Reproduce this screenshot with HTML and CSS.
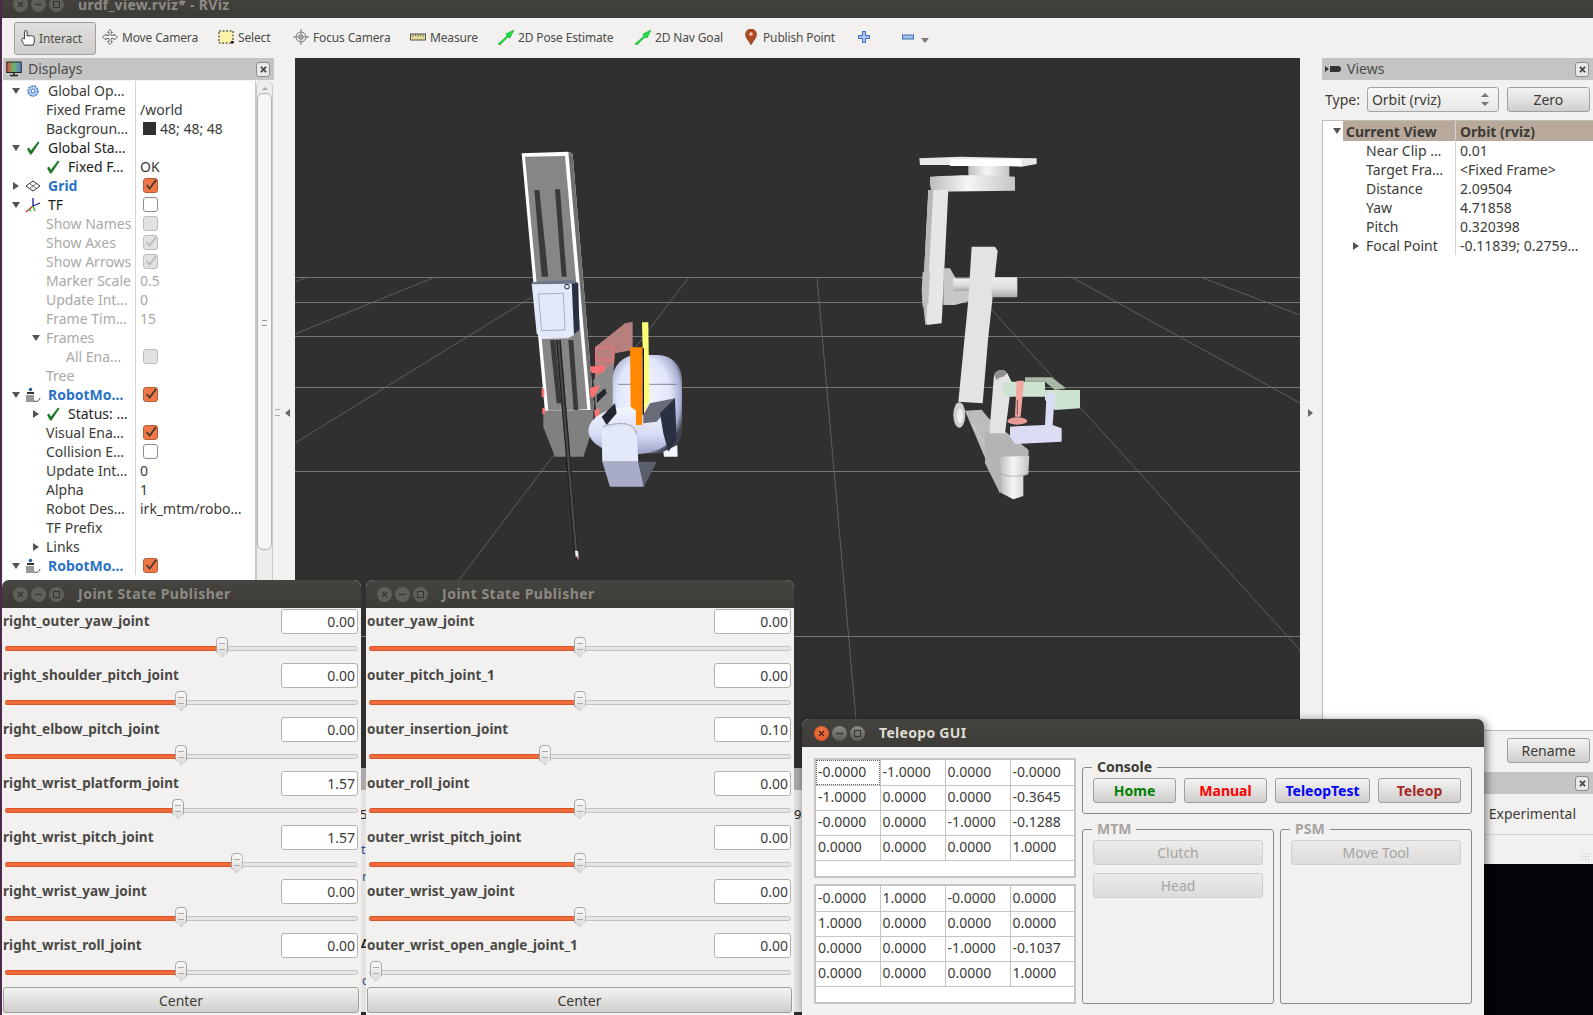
FILE: index.html
```html
<!DOCTYPE html>
<html lang="en">
<head>
<meta charset="utf-8">
<title>urdf_view.rviz* - RViz</title>
<link rel="stylesheet" href="styles.css">
</head>
<body>
<svg class="defs" width="0" height="0" aria-hidden="true">
  <defs>
    <linearGradient id="cyl" x1="0" x2="1" y1="0" y2="0"><stop offset="0" stop-color="#bdbdbd"/><stop offset=".45" stop-color="#f6f6f6"/><stop offset="1" stop-color="#c4c4c4"/></linearGradient>
    <linearGradient id="cylv" x1="0" x2="0" y1="0" y2="1"><stop offset="0" stop-color="#f0f0f0"/><stop offset=".6" stop-color="#d8d8d8"/><stop offset="1" stop-color="#a8a8a8"/></linearGradient>
    <radialGradient id="ball" cx=".45" cy=".42" r=".62"><stop offset="0" stop-color="#f4f6ff"/><stop offset=".62" stop-color="#e2e6fb"/><stop offset=".86" stop-color="#a8aed0"/><stop offset="1" stop-color="#3f4252"/></radialGradient>
    <linearGradient id="bowl" x1="0" x2="0" y1="0" y2="1"><stop offset="0" stop-color="#f4f6ff"/><stop offset=".6" stop-color="#d6daf4"/><stop offset="1" stop-color="#9a9fc4"/></linearGradient>
    <linearGradient id="mon" x1="0" x2="1" y1="0" y2="0"><stop offset="0" stop-color="#e04a3c"/><stop offset=".5" stop-color="#62b86a"/><stop offset="1" stop-color="#5d78d0"/></linearGradient>
    <symbol id="i-check" viewBox="0 0 16 16"><path d="M2 9l2-1.500 2 3L13 1.500l1.500 1L6.500 14.500 5 14.500z" fill="#1e7a26"/></symbol>
    <symbol id="i-box" viewBox="0 0 15 15"><path d="M3 7l3.500 4L14 1" fill="none" stroke="currentColor" stroke-width="2"/></symbol>
    <symbol id="i-robot" viewBox="0 0 16 16"><circle cx="5.500" cy="2.500" r="1.800" fill="#2f5f9e"/><rect x="2" y="5" width="7" height="2" fill="#333"/><path d="M2 15V8M4 15V8M6 15V8M8 15V8" stroke="#444" stroke-width="1.100"/><path d="M9 14c3 1 5 0 6-3" fill="none" stroke="#444"/></symbol>
    <symbol id="i-x" viewBox="0 0 15 15"><path d="M4 4l7 7M11 4l-7 7" stroke="currentColor" stroke-width="2.400"/></symbol>
  </defs>
</svg>

<div class="desktop">
  <div class="strip"></div>

  <!-- RViz main window -->
  <section class="win rviz">
    <header class="titlebar">
      <div class="lights">
        <span class="light"><svg viewBox="0 0 9 9"><path d="M2 2l5 5M7 2L2 7" stroke="#333" stroke-width="1.200"/></svg></span>
        <span class="light"><svg viewBox="0 0 9 9"><path d="M1 4.500h7" stroke="#333" stroke-width="1.200"/></svg></span>
        <span class="light"><svg viewBox="0 0 9 9"><rect x="1.500" y="1.500" width="6" height="6" fill="none" stroke="#333"/></svg></span>
      </div>
      <span class="wintitle">urdf_view.rviz* - RViz</span>
    </header>

    <nav class="toolbar">
      <div class="tool tool-active">
        <svg class="ticon" viewBox="0 0 16 18"><path d="M4 17c-1-2-3-4-3-6 0-2 1-2 3-1V2c0-2 3-2 3 0v5c2-1 3-1 3 0 1-1 2-1 3 0 1-.5 2 0 2 1v6l-1 3z" fill="#fff" stroke="#222"/></svg>
        <span>Interact</span>
      </div>
      <div class="tool">
        <svg class="ticon" viewBox="0 0 16 16"><path d="M8 .5l2.500 3H9v3h3V5l3.500 3L12 11V9.500H9v3h1.500L8 15.500l-2.500-3H7v-3H4V11L.5 8 4 5v1.500h3v-3H5.500z" fill="#f4f4f4" stroke="#555" stroke-width=".8"/></svg>
        <span>Move Camera</span>
      </div>
      <div class="tool">
        <svg class="ticon" viewBox="0 0 16 16"><rect x="1" y="2" width="14" height="12" fill="#fbf3a6" stroke="#222" stroke-dasharray="2 1.500"/><rect x="13" y="12" width="2.500" height="2.500" fill="#111"/></svg>
        <span>Select</span>
      </div>
      <div class="tool">
        <svg class="ticon" viewBox="0 0 16 16"><path d="M8 0v16M0 8h16" stroke="#777"/><circle cx="8" cy="8" r="5" fill="#e8e8e8" stroke="#777"/><circle cx="8" cy="8" r="2.200" fill="none" stroke="#777"/><path d="M8 3v10M3 8h10" stroke="#777" stroke-width=".7"/></svg>
        <span>Focus Camera</span>
      </div>
      <div class="tool">
        <svg class="ticon" viewBox="0 0 16 16"><rect x=".5" y="5" width="15" height="6" fill="#e7dc98" stroke="#555"/><path d="M3 5v3M5.500 5v2M8 5v3M10.500 5v2M13 5v3" stroke="#555" stroke-width=".8"/></svg>
        <span>Measure</span>
      </div>
      <div class="tool">
        <svg class="ticon" viewBox="0 0 16 16"><path d="M0 15L9 7 8 5l8-4-4 8-2-1-8 8z" fill="#19e63c" stroke="#0e8a23" stroke-width=".5"/></svg>
        <span>2D Pose Estimate</span>
      </div>
      <div class="tool">
        <svg class="ticon" viewBox="0 0 16 16"><path d="M0 15L9 7 8 5l8-4-4 8-2-1-8 8z" fill="#19e63c" stroke="#0e8a23" stroke-width=".5"/></svg>
        <span>2D Nav Goal</span>
      </div>
      <div class="tool tool-pin">
        <svg class="ticon pin" viewBox="0 0 12 16"><path d="M6 0C2.500 0 .5 2.500.5 5.500.5 9 4 12 6 16c2-4 5.500-7 5.500-10.500C11.500 2.500 9.500 0 6 0z" fill="#b3491f" stroke="#6b4a33" stroke-width=".6"/><circle cx="6" cy="5" r="1.800" fill="#e8d2b8"/></svg>
        <span>Publish Point</span>
      </div>
      <div class="tool">
        <svg class="ticon small" viewBox="0 0 12 12"><path d="M4.500.5h3v4h4v3h-4v4h-3v-4h-4v-3h4z" fill="#a8c4ee" stroke="#3b6fb5"/></svg>
      </div>
      <div class="tool">
        <svg class="ticon small" viewBox="0 0 12 12"><rect x=".5" y="4" width="11" height="4" fill="#a8c4ee" stroke="#3b6fb5"/></svg>
        <span class="drop"></span>
      </div>
    </nav>

    <main class="mainarea">
      <!-- Displays dock -->
      <aside class="dock dock-left">
        <div class="dockhead">
          <svg class="dockicon" viewBox="0 0 16 16"><rect x=".8" y="1" width="14.400" height="10.500" fill="url(#mon)" stroke="#222"/><path d="M8 12v2M4 14.500h8" stroke="#222" stroke-width="1.400"/></svg>
          <span class="docktitle">Displays</span>
          <span class="dockclose"><svg viewBox="0 0 15 15"><use href="#i-x"/></svg></span>
        </div>
        <div class="treewrap">
          <div class="tree">
            <div class="row"><div class="n"><span class="tw open"></span><svg class="ic" viewBox="0 0 16 16"><circle cx="8" cy="8" r="5" fill="#bcd2f2" stroke="#3f77c8" stroke-width="1.500" stroke-dasharray="2 1"/><circle cx="8" cy="8" r="2" fill="#fff" stroke="#3f77c8"/></svg><span class="t">Global Op…</span></div><div class="v"></div></div>
            <div class="row"><div class="n p43"><span class="t">Fixed Frame</span></div><div class="v">/world</div></div>
            <div class="row"><div class="n p43"><span class="t">Backgroun…</span></div><div class="v"><span class="swatch"></span>48; 48; 48</div></div>
            <div class="row"><div class="n"><span class="tw open"></span><svg class="ic" viewBox="0 0 16 16"><use href="#i-check"/></svg><span class="t dark">Global Sta…</span></div><div class="v"></div></div>
            <div class="row"><div class="n p42"><svg class="ic" viewBox="0 0 16 16"><use href="#i-check"/></svg><span class="t dark">Fixed F…</span></div><div class="v">OK</div></div>
            <div class="row"><div class="n"><span class="tw"></span><svg class="ic" viewBox="0 0 16 16"><path d="M8 3l7 5-7 5-7-5z" fill="none" stroke="#333"/><path d="M4.500 5.500l7 5M11.500 5.500l-7 5" stroke="#333" stroke-width=".7"/></svg><span class="t blue">Grid</span></div><div class="v"><span class="cb on"><svg viewBox="0 0 15 15"><use href="#i-box"/></svg></span></div></div>
            <div class="row"><div class="n"><span class="tw open"></span><svg class="ic" viewBox="0 0 16 16"><path d="M8 9l7-3" stroke="#1a1acc" stroke-width="1.300"/><path d="M8 9V1" stroke="#1a1a9c" stroke-width="1.300"/><path d="M8 9l-7 6" stroke="#e02020" stroke-width="1.300"/><path d="M8 9l2 5M4 12l2 2" stroke="#20b020" stroke-width="1.300"/></svg><span class="t dark">TF</span></div><div class="v"><span class="cb"></span></div></div>
            <div class="row dis"><div class="n p43"><span class="t">Show Names</span></div><div class="v"><span class="cb off"></span></div></div>
            <div class="row dis"><div class="n p43"><span class="t">Show Axes</span></div><div class="v"><span class="cb off"><svg viewBox="0 0 15 15"><use href="#i-box"/></svg></span></div></div>
            <div class="row dis"><div class="n p43"><span class="t">Show Arrows</span></div><div class="v"><span class="cb off"><svg viewBox="0 0 15 15"><use href="#i-box"/></svg></span></div></div>
            <div class="row dis"><div class="n p43"><span class="t">Marker Scale</span></div><div class="v">0.5</div></div>
            <div class="row dis"><div class="n p43"><span class="t">Update Int…</span></div><div class="v">0</div></div>
            <div class="row dis"><div class="n p43"><span class="t">Frame Tim…</span></div><div class="v">15</div></div>
            <div class="row dis"><div class="n p26"><span class="tw open"></span><span class="t tw-t">Frames</span></div><div class="v"></div></div>
            <div class="row dis"><div class="n p63"><span class="t">All Ena…</span></div><div class="v"><span class="cb off"></span></div></div>
            <div class="row dis"><div class="n p43"><span class="t">Tree</span></div><div class="v"></div></div>
            <div class="row"><div class="n"><span class="tw open"></span><svg class="ic" viewBox="0 0 16 16"><use href="#i-robot"/></svg><span class="t blue">RobotMo…</span></div><div class="v"><span class="cb on"><svg viewBox="0 0 15 15"><use href="#i-box"/></svg></span></div></div>
            <div class="row"><div class="n p26"><span class="tw"></span><svg class="ic" viewBox="0 0 16 16"><use href="#i-check"/></svg><span class="t dark">Status: …</span></div><div class="v"></div></div>
            <div class="row"><div class="n p43"><span class="t">Visual Ena…</span></div><div class="v"><span class="cb on"><svg viewBox="0 0 15 15"><use href="#i-box"/></svg></span></div></div>
            <div class="row"><div class="n p43"><span class="t">Collision E…</span></div><div class="v"><span class="cb"></span></div></div>
            <div class="row"><div class="n p43"><span class="t">Update Int…</span></div><div class="v">0</div></div>
            <div class="row"><div class="n p43"><span class="t">Alpha</span></div><div class="v">1</div></div>
            <div class="row"><div class="n p43"><span class="t">Robot Des…</span></div><div class="v">irk_mtm/robo…</div></div>
            <div class="row"><div class="n p43"><span class="t">TF Prefix</span></div><div class="v"></div></div>
            <div class="row"><div class="n p26"><span class="tw"></span><span class="t tw-t">Links</span></div><div class="v"></div></div>
            <div class="row"><div class="n"><span class="tw open"></span><svg class="ic" viewBox="0 0 16 16"><use href="#i-robot"/></svg><span class="t blue">RobotMo…</span></div><div class="v"><span class="cb on"><svg viewBox="0 0 15 15"><use href="#i-box"/></svg></span></div></div>
          </div>
          <div class="scrollbar"><span class="scrollup"></span><div class="thumb"><span class="vgrip"></span></div></div>
        </div>
      </aside>

      <div class="splitter">
        <span class="hgrip"></span>
        <span class="arrow-left"></span>
      </div>

      <!-- 3D viewport -->
      <div class="viewport">
        <svg class="scene" viewBox="295 58 1005 957" preserveAspectRatio="none">
          <g class="grid">
            <path d="M295 277.500H1300M295 302.500H1300M295 336.500H1300M295 387.500H1300M295 471.500H1300M295 636.500H1300"/>
            <path class="diag" d="M295 334L435 277M295 443L532 297M459 580L689 277M817 277L856 720M1071 277L1300 403M1200 277L1300 315M962 277L1300 650M295 282L308 277"/>
          </g>
          <!-- left robot -->
          <g transform="translate(500 140) scale(.3333)">
            <path d="M65 40L205 35 218 42 282 810 135 815z" fill="#fff"/>
            <path d="M205 36L218 42 282 810 272 810z" fill="#6f6f6f"/>
            <path d="M75 50L195 48 262 808 145 812z" fill="#868686"/>
            <path d="M103 150h15l27 260h-20zM165 148h15l20 262h-15zM150 600h16l18 190h-14zM205 600h15l15 210h-14z" fill="#3a3a3a"/>
            <path d="M130 812l150-2v50l-30 90h-85l-20-50-15-40z" fill="#808080"/>
            <path d="M125 745l8 3v25l-8-3zM127 805l8-3v20h-8z" fill="#ff7070"/>
            <path d="M215 425l20 5 3 140-33 25z" fill="#2b3040"/>
            <path d="M95 430l120-5 7 160-17 10-80 2-15-17z" fill="#e3e9fb"/>
            <path d="M97 426l118-6 20 8-20 3-118 2z" fill="#6e7488"/>
            <path d="M115 462l75-2 5 110-70 2z" fill="none" stroke="#8d93a8" stroke-width="2"/>
            <circle cx="201" cy="440" r="7" fill="none" stroke="#222" stroke-width="3"/>
            <path d="M285 622l90-72 23-5v85l-53 10-5 60-55 20z" fill="#b87f7f"/>
            <path d="M280 720l60-50 5 130-55 30z" fill="#8a8a8a"/>
            <path d="M270 680l40-5 5 20-40 5zM270 745l30-10-20 40-8-5zM283 810l15-5v30l-13 3z" fill="#ff7070"/>
            <rect x="287" y="622" width="50" height="38" fill="none" stroke="#ff7070" stroke-width="3"/>
            <path d="M290 765l25-20 5 15-30 30z" fill="#23262e"/>
            <rect x="338" y="645" width="208" height="295" rx="72" fill="url(#ball)"/>
            <path d="M490 935l42-20 1 35h-41z" fill="#f4f6ff"/>
            <ellipse cx="395" cy="872" rx="130" ry="72" fill="url(#bowl)"/>
            <path d="M355 733H530" stroke="#555" stroke-width="2"/>
            <path d="M426 547h19l3 233-18 45-2-205z" fill="#ffff77"/>
            <path d="M390 622h38v186l-2 47h-18v-43l-16-12z" fill="#ff8800"/>
            <path d="M428 625h4v200h-4z" fill="#111"/>
            <path d="M430 825l20-35 75-15-5 15-50 55-40 5z" fill="#6a6d78"/>
            <path d="M525 775l5 125-25 35-15-55-10-60z" fill="#2b3040"/>
            <path d="M305 830l40-40 5 30-30 35z" fill="#23262e"/>
            <path d="M305 870l75-15 30 25 5 85H307z" fill="#e3e9fb"/>
            <path d="M310 860c30-10 60-12 78-5 14 5 20 15 22 30" fill="none" stroke="#333" stroke-width="1.500" stroke-dasharray="5 2"/>
            <path d="M307 965h108l17 75H330z" fill="#a8acc8"/>
            <path d="M415 965h55l-38 75z" fill="#5b5e6b"/>
            <path d="M168 600h14l53 640h-10z" fill="#4a4a4a"/>
            <path d="M168 600h4l53 640h-3zM178 600h4l53 640h-3z" fill="#1f1f1f"/>
            <path d="M225 1232h9l2 18h-9z" fill="#eee"/>
            <path d="M231 1250h5v8h-3z" fill="#e88"/>
          </g>
          <!-- right robot -->
          <g transform="translate(900 140) scale(.3333)">
            <path d="M58 55l122-5 230 5v17l-45 8-225-5H60z" fill="#e8e8e8"/>
            <path d="M150 58h215v20H150z" fill="#fff"/>
            <rect x="205" y="78" width="123" height="34" fill="url(#cyl)"/>
            <path d="M90 110c80-6 180-6 255 0v42l-250 3-5-20z" fill="url(#cyl)"/>
            <path d="M85 150h60l-20 400-45 5-12-75z" fill="#e6e6e6"/>
            <path d="M85 150h15L78 555h-2l-8-75z" fill="#b8b8b8"/>
            <path d="M68 395l22 0-5 95-17 10-3-50z" fill="#bfbfbf"/>
            <path d="M130 385h20l20 35 45-2 3 62-53 15h-35z" fill="#c8c8c8"/>
            <rect x="160" y="415" width="58" height="38" fill="url(#cylv)"/>
            <path d="M215 320h70l8 12-28 258-17 200-73-5 30-305z" fill="#e3e3e3"/>
            <rect x="275" y="412" width="77" height="60" rx="4" fill="url(#cylv)"/>
            <ellipse cx="178" cy="825" rx="18" ry="38" fill="#cfcfcf"/>
            <ellipse cx="180" cy="828" rx="9" ry="22" fill="#efefef"/>
            <path d="M195 812l50-3 20 25 120 96v30L300 1060z" fill="#bcbcbc"/>
            <path d="M215 850l80 130" stroke="#ddd" stroke-width="2"/>
            <path d="M255 875l75 10 55 45v40l-85 90-45-90z" fill="#b4b4b4"/>
            <path d="M300 950l88-2-3 55-15 5v60l-30 10-35-18z" fill="url(#cyl)"/>
            <path d="M300 1000c25 12 60 12 85 0" fill="none" stroke="#999" stroke-width="2"/>
            <path d="M282 705c8-18 30-20 40-5l13 25-20 155h-47z" fill="#e3e3e3"/>
            <path d="M282 705c8-18 30-20 40-5l-12 10c-6 0-14 2-20 10z" fill="#8f8f8f"/>
            <path d="M375 712h80l43 33-33 5-30-25h-60z" fill="#a8b8a8"/>
            <path d="M320 725h115v45H320c-20-8-20-38 0-45z" fill="#cfe3d2"/>
            <path d="M435 750h105v55l-75 5-30-30z" fill="#cfe3d2"/>
            <path d="M440 760h25l-7 95 27 10v40l-140 7-15-22v-30l105-5z" fill="#dcdcf5"/>
            <path d="M350 722h22l-10 108h-17z" fill="#f4a6a0"/>
            <path d="M352 780v45" stroke="#222" stroke-width="2"/>
            <ellipse cx="352" cy="843" rx="30" ry="11" fill="#e89a94"/>
          </g>
        </svg>
      </div>

      <div class="splitter splitter-right">
        <span class="arrow-right"></span>
      </div>

      <!-- Views dock -->
      <aside class="dock dock-right">
        <div class="dockhead">
          <svg class="dockicon" viewBox="0 0 16 16"><path d="M0 5l4 3-4 3zM5 5h8c2 0 3 1 3 3s-1 3-3 3H5z" fill="#333"/></svg>
          <span class="docktitle">Views</span>
          <span class="dockclose"><svg viewBox="0 0 15 15"><use href="#i-x"/></svg></span>
        </div>
        <div class="typerow">
          <span>Type:</span>
          <div class="combo"><span>Orbit (rviz)</span><span class="spin"></span></div>
          <div class="btn btn-zero">Zero</div>
        </div>
        <div class="vtree">
          <div class="vrow vhead"><div class="vn"><span class="tw open"></span><span class="hl">Current View</span></div><div class="vv hl">Orbit (rviz)</div></div>
          <div class="vrow"><div class="vn vp">Near Clip …</div><div class="vv">0.01</div></div>
          <div class="vrow"><div class="vn vp">Target Fra…</div><div class="vv">&lt;Fixed Frame&gt;</div></div>
          <div class="vrow"><div class="vn vp">Distance</div><div class="vv">2.09504</div></div>
          <div class="vrow"><div class="vn vp">Yaw</div><div class="vv">4.71858</div></div>
          <div class="vrow"><div class="vn vp">Pitch</div><div class="vv">0.320398</div></div>
          <div class="vrow"><div class="vn vp2"><span class="tw"></span>Focal Point</div><div class="vv">-0.11839; 0.2759…</div></div>
        </div>
        <div class="viewbtns"><div class="btn btn-zero">Rename</div></div>
        <div class="dockhead dockhead-tools"><span class="dockclose"><svg viewBox="0 0 15 15"><use href="#i-x"/></svg></span></div>
        <div class="exprow"><span>Experimental</span></div>
        <div class="statusrow"><span class="sizegrip"></span></div>
        <div class="blackfill"></div>
      </aside>
    </main>
  </section>

  <!-- partly hidden window behind the publishers -->
  <div class="behind">
    <span class="bt bt-a">5</span>
    <span class="bt bt-b">ti</span>
    <span class="bt bt-c">n</span>
    <span class="bt bt-d">Δ</span>
    <span class="bt bt-e">c</span>
    <span class="bt bt-f">98</span>
  </div>

  <!-- Joint State Publisher 1 -->
  <section class="win jsp jsp-a">
    <header class="titlebar">
      <div class="lights">
        <span class="light"><svg viewBox="0 0 9 9"><path d="M2 2l5 5M7 2L2 7" stroke="#333" stroke-width="1.200"/></svg></span>
        <span class="light"><svg viewBox="0 0 9 9"><path d="M1 4.500h7" stroke="#333" stroke-width="1.200"/></svg></span>
        <span class="light"><svg viewBox="0 0 9 9"><rect x="1.500" y="1.500" width="6" height="6" fill="none" stroke="#333"/></svg></span>
      </div>
      <span class="wintitle">Joint State Publisher</span>
    </header>
    <div class="jbody">
      <div class="joint"><div class="jhead"><span class="jname">right_outer_yaw_joint</span><span class="jval">0.00</span></div><div class="slider"><div class="fill" style="width:61.6%"></div><span class="knob" style="left:61.6%"></span></div></div>
      <div class="joint"><div class="jhead"><span class="jname">right_shoulder_pitch_joint</span><span class="jval">0.00</span></div><div class="slider"><div class="fill" style="width:49.9%"></div><span class="knob" style="left:49.9%"></span></div></div>
      <div class="joint"><div class="jhead"><span class="jname">right_elbow_pitch_joint</span><span class="jval">0.00</span></div><div class="slider"><div class="fill" style="width:49.9%"></div><span class="knob" style="left:49.9%"></span></div></div>
      <div class="joint"><div class="jhead"><span class="jname">right_wrist_platform_joint</span><span class="jval">1.57</span></div><div class="slider"><div class="fill" style="width:49%"></div><span class="knob" style="left:49%"></span></div></div>
      <div class="joint"><div class="jhead"><span class="jname">right_wrist_pitch_joint</span><span class="jval">1.57</span></div><div class="slider"><div class="fill" style="width:65.7%"></div><span class="knob" style="left:65.7%"></span></div></div>
      <div class="joint"><div class="jhead"><span class="jname">right_wrist_yaw_joint</span><span class="jval">0.00</span></div><div class="slider"><div class="fill" style="width:49.9%"></div><span class="knob" style="left:49.9%"></span></div></div>
      <div class="joint"><div class="jhead"><span class="jname">right_wrist_roll_joint</span><span class="jval">0.00</span></div><div class="slider"><div class="fill" style="width:49.9%"></div><span class="knob" style="left:49.9%"></span></div></div>
      <div class="btn btn-center">Center</div>
    </div>
  </section>

  <!-- Joint State Publisher 2 -->
  <section class="win jsp jsp-b">
    <header class="titlebar">
      <div class="lights">
        <span class="light"><svg viewBox="0 0 9 9"><path d="M2 2l5 5M7 2L2 7" stroke="#333" stroke-width="1.200"/></svg></span>
        <span class="light"><svg viewBox="0 0 9 9"><path d="M1 4.500h7" stroke="#333" stroke-width="1.200"/></svg></span>
        <span class="light"><svg viewBox="0 0 9 9"><rect x="1.500" y="1.500" width="6" height="6" fill="none" stroke="#333"/></svg></span>
      </div>
      <span class="wintitle">Joint State Publisher</span>
    </header>
    <div class="jbody">
      <div class="joint"><div class="jhead"><span class="jname">outer_yaw_joint</span><span class="jval">0.00</span></div><div class="slider"><div class="fill" style="width:49.9%"></div><span class="knob" style="left:49.9%"></span></div></div>
      <div class="joint"><div class="jhead"><span class="jname">outer_pitch_joint_1</span><span class="jval">0.00</span></div><div class="slider"><div class="fill" style="width:49.9%"></div><span class="knob" style="left:49.9%"></span></div></div>
      <div class="joint"><div class="jhead"><span class="jname">outer_insertion_joint</span><span class="jval">0.10</span></div><div class="slider"><div class="fill" style="width:41.6%"></div><span class="knob" style="left:41.6%"></span></div></div>
      <div class="joint"><div class="jhead"><span class="jname">outer_roll_joint</span><span class="jval">0.00</span></div><div class="slider"><div class="fill" style="width:49.9%"></div><span class="knob" style="left:49.9%"></span></div></div>
      <div class="joint"><div class="jhead"><span class="jname">outer_wrist_pitch_joint</span><span class="jval">0.00</span></div><div class="slider"><div class="fill" style="width:49.9%"></div><span class="knob" style="left:49.9%"></span></div></div>
      <div class="joint"><div class="jhead"><span class="jname">outer_wrist_yaw_joint</span><span class="jval">0.00</span></div><div class="slider"><div class="fill" style="width:49.9%"></div><span class="knob" style="left:49.9%"></span></div></div>
      <div class="joint"><div class="jhead"><span class="jname">outer_wrist_open_angle_joint_1</span><span class="jval">0.00</span></div><div class="slider"><span class="knob" style="left:1.4%"></span></div></div>
      <div class="btn btn-center">Center</div>
    </div>
  </section>

  <!-- Teleopo GUI -->
  <section class="win teleop">
    <header class="titlebar">
      <div class="lights">
        <span class="light light-close"><svg viewBox="0 0 9 9"><path d="M2 2l5 5M7 2L2 7" stroke="#4a1c08" stroke-width="1.200"/></svg></span>
        <span class="light light-on"><svg viewBox="0 0 9 9"><path d="M1 4.500h7" stroke="#333" stroke-width="1.200"/></svg></span>
        <span class="light light-on"><svg viewBox="0 0 9 9"><rect x="1.500" y="1.500" width="6" height="6" fill="none" stroke="#333"/></svg></span>
      </div>
      <span class="wintitle">Teleopo GUI</span>
    </header>
    <div class="tbody">
      <div class="tables">
        <div class="matrix">
          <table>
            <tr><td class="focus">-0.0000</td><td>-1.0000</td><td>0.0000</td><td>-0.0000</td></tr>
            <tr><td>-1.0000</td><td>0.0000</td><td>0.0000</td><td>-0.3645</td></tr>
            <tr><td>-0.0000</td><td>0.0000</td><td>-1.0000</td><td>-0.1288</td></tr>
            <tr><td>0.0000</td><td>0.0000</td><td>0.0000</td><td>1.0000</td></tr>
          </table>
        </div>
        <div class="matrix">
          <table>
            <tr><td>-0.0000</td><td>1.0000</td><td>-0.0000</td><td>0.0000</td></tr>
            <tr><td>1.0000</td><td>0.0000</td><td>0.0000</td><td>0.0000</td></tr>
            <tr><td>0.0000</td><td>0.0000</td><td>-1.0000</td><td>-0.1037</td></tr>
            <tr><td>0.0000</td><td>0.0000</td><td>0.0000</td><td>1.0000</td></tr>
          </table>
        </div>
      </div>
      <div class="controls">
        <fieldset class="group group-console">
          <legend>Console</legend>
          <div class="consolebtns">
            <div class="btn bold c-green">Home</div>
            <div class="btn bold c-red">Manual</div>
            <div class="btn bold c-blue">TeleopTest</div>
            <div class="btn bold c-brown">Teleop</div>
          </div>
        </fieldset>
        <div class="groups">
          <fieldset class="group group-off">
            <legend>MTM</legend>
            <div class="btn btn-off">Clutch</div>
            <div class="btn btn-off">Head</div>
          </fieldset>
          <fieldset class="group group-off">
            <legend>PSM</legend>
            <div class="btn btn-off">Move Tool</div>
          </fieldset>
        </div>
      </div>
    </div>
  </section>
</div>
</body>
</html>
```

FILE: styles.css
```css
* { box-sizing: border-box; }
html, body { margin: 0; padding: 0; }
body {
  width: 1593px; height: 1015px; overflow: hidden;
  font-family: "Noto Sans", "Open Sans", sans-serif;
  font-size: 14px; color: #3c3b37; background: #2d2d2d;
}
.defs { position: absolute; }
.desktop { position: relative; width: 1593px; height: 1015px; overflow: hidden; background: #3a1f38; }
.strip { width: 2px; height: 100%; background: #4a2a48; }

/* Windows sit on a free desktop */
.win { position: absolute; display: flex; flex-direction: column; background: #f2f1f0; border-radius: 7px 7px 0 0; }
.rviz { left: 2px; top: -10px; width: 1591px; height: 1025px; }
.jsp-a { left: 2px; top: 580px; width: 359px; height: 435px; }
.jsp-b { left: 366px; top: 580px; width: 428px; height: 435px; }
.teleop { left: 802px; top: 719px; width: 682px; height: 296px; box-shadow: 2px 2px 10px rgba(0,0,0,.55); }

.titlebar { flex: 0 0 28px; height: 28px; background: linear-gradient(#46443f, #3c3b37); border-radius: 7px 7px 0 0; display: flex; align-items: center; padding-left: 11px; }
.lights { display: flex; gap: 3px; }
.light { width: 15px; height: 15px; border-radius: 50%; background: #5f5e5a; display: flex; align-items: center; justify-content: center; }
.light svg { width: 9px; height: 9px; }
.light-close { background: radial-gradient(circle at 50% 40%, #f08050, #d8481c); }
.light-on { background: linear-gradient(#8a8883, #5c5b56); }
.wintitle { margin-left: 14px; font-weight: 700; font-size: 14px; letter-spacing: .5px; color: #8d8a84; white-space: nowrap; }
.jsp .wintitle, .teleop .wintitle { padding-bottom: 2px; }
.rviz .wintitle { font-size: 14px; letter-spacing: .3px; }
.teleop .titlebar { padding-left: 12px; }
.teleop .wintitle { color: #dfdbd2; letter-spacing: .3px; }

/* Toolbar */
.toolbar { flex: 0 0 40px; display: grid; grid-template-columns: 88px 116px 75px 117px 88px 137px 110px 113px 44px 1fr; padding-left: 12px; align-items: center; font-size: 12px; letter-spacing: -.15px; }
.tool { display: flex; align-items: center; gap: 4px; height: 33px; padding-bottom: 2px; white-space: nowrap; color: #4c4b47; }
.tool-active { width: 82px; padding: 0 0 0 5px; gap: 3px; border: 1px solid #a09f9c; border-radius: 3px; background: linear-gradient(#e0dfdd, #cfcecc); }
.ticon { width: 16px; height: 16px; flex: none; }
.ticon.small { width: 12px; height: 12px; }
.ticon.pin { width: 12px; height: 16px; margin-right: 2px; }
.drop { width: 0; height: 0; margin: 6px 0 0 3px; border: 4px solid transparent; border-top: 5px solid #7a7a7a; border-bottom: 0; }

/* Main area */
.mainarea { flex: 1; min-height: 0; display: flex; }
.dock { flex: none; display: flex; flex-direction: column; background: #f2f1f0; }
.dock-left { width: 271px; margin-left: 1px; }
.dock-right { width: 271px; }
.dockhead { flex: 0 0 22px; height: 22px; background: #c4c4c4; display: flex; align-items: center; padding-left: 3px; padding-right: 4px; }
.dockicon { width: 16px; height: 16px; flex: none; }
.docktitle { margin-left: 6px; padding-bottom: 2px; color: #4c4b47; font-size: 14px; }
.dockclose { margin-left: auto; width: 14px; height: 15px; background: #e8e8e6; border: 1px solid #8d8c89; border-radius: 3px; color: #444; display: flex; align-items: center; justify-content: center; }
.dockclose svg { width: 11px; height: 11px; }

.treewrap { flex: 1; display: flex; min-height: 0; padding-top: 1px; }
.tree { width: 253px; flex: none; background: #fff; border-right: 1px solid #c9c8c6; }
.row { height: 19px; display: flex; align-items: center; white-space: nowrap; }
.n { width: 133px; height: 19px; flex: none; display: flex; align-items: center; padding-left: 6px; border-right: 1px solid #d6d5d3; overflow: hidden; }
.v { padding-left: 4px; display: flex; align-items: center; }
.p42 { padding-left: 42px; }
.p43 { padding-left: 43px; }
.p26 { padding-left: 26px; }
.p63 { padding-left: 63px; }
.tw { width: 13px; height: 12px; flex: none; position: relative; display: block; }
.tw::after { content: ""; position: absolute; left: 4px; top: 2px; border-left: 6px solid #555; border-top: 4px solid transparent; border-bottom: 4px solid transparent; }
.tw.open::after { left: 3px; top: 3px; border-top: 6px solid #555; border-left: 4px solid transparent; border-right: 4px solid transparent; border-bottom: 0; }
.ic { width: 16px; height: 16px; flex: none; margin-left: 3px; }
.p42 .ic { margin-left: 0; }
.t { margin-left: 7px; }
.p43 .t, .p63 .t { margin-left: 0; }
.tw-t { margin-left: 4px; }
.dark { color: #1c1c1a; }
.blue { color: #2a72c8; font-weight: 700; }
.dis, .dis .v { color: #aaa9a7; }
.swatch { width: 13px; height: 13px; background: #303030; margin: 0 4px 0 3px; }
.cb { width: 15px; height: 15px; margin-left: 3px; border: 1px solid #8e8d8a; border-radius: 3px; background: #fff; display: flex; color: #4a3a33; }
.cb svg { width: 13px; height: 13px; }
.cb.on { background: #f07746; border-color: #b85c35; }
.cb.off { background: #e3e2e0; border-color: #bdbcba; color: #bbb; }

.scrollbar { width: 17px; background: #ededeb; border-right: 1px solid #c9c8c6; border-left: 1px solid #c9c8c6; position: relative; border-radius: 6px 6px 0 0; }
.scrollup { position: absolute; left: 5px; top: 6px; border-left: 3px solid transparent; border-right: 3px solid transparent; border-bottom: 3px solid #aaa; }
.thumb { position: absolute; left: 0; right: 0; top: 12px; height: 457px; background: #f6f6f5; border: 1px solid #b5b4b1; border-radius: 6px; }
.vgrip { position: absolute; left: 4px; right: 4px; top: 226px; height: 6px; border-top: 1px solid #999; border-bottom: 1px solid #999; }

.splitter { flex: 0 0 21px; position: relative; }
.splitter-right { flex: 0 0 22px; }
.hgrip { position: absolute; left: 1px; top: 351px; width: 5px; height: 7px; border-top: 1px solid #aaa; border-bottom: 1px solid #aaa; }
.arrow-left, .arrow-right { position: absolute; top: 351px; border-top: 4px solid transparent; border-bottom: 4px solid transparent; }
.arrow-left { left: 11px; border-right: 5px solid #666; }
.arrow-right { left: 8px; border-left: 5px solid #666; }

.viewport { flex: 0 0 1005px; background: #303030; }
.scene { display: block; width: 100%; height: 100%; }
.grid path { fill: none; stroke: #777; stroke-width: 1; }
.grid .diag { stroke: #6a6a6a; stroke-width: .8; }

/* Views dock */
.typerow { display: flex; align-items: center; height: 25px; margin-top: 7px; padding-left: 3px; }
.combo { width: 132px; height: 25px; margin-left: 7px; border: 1px solid #a5a4a1; border-radius: 3px; background: linear-gradient(#f8f8f7, #e8e7e5); display: flex; align-items: center; justify-content: space-between; padding: 0 9px 0 4px; }
.spin { width: 8px; height: 13px; position: relative; }
.spin::before, .spin::after { content: ""; position: absolute; left: 0; border-left: 4px solid transparent; border-right: 4px solid transparent; }
.spin::before { top: 0; border-bottom: 4px solid #777; }
.spin::after { bottom: 0; border-top: 4px solid #777; }
.btn { height: 25px; display: flex; align-items: center; justify-content: center; border: 1px solid #a09f9c; border-radius: 3px; background: linear-gradient(#f3f3f2 0%, #e2e1df 50%, #cfcecc 100%); white-space: nowrap; }
.btn-zero { width: 83px; margin-left: 8px; }
.vtree { height: 611px; margin-top: 8px; flex: none; background: #fff; border: 1px solid #bdbcba; border-right: 0; }
.vrow { height: 19px; display: flex; align-items: center; white-space: nowrap; }
.vhead { height: 20px; font-weight: 700; color: #3c3b37; }
.vn { width: 133px; height: 100%; flex: none; display: flex; align-items: center; border-right: 1px solid #d6d5d3; }
.vhead .vn { padding-left: 7px; }
.hl { background: #b8a99b; height: 100%; display: flex; align-items: center; }
.vn .hl { flex: 1; padding-left: 3px; }
.vv { flex: 1; padding-left: 4px; height: 100%; display: flex; align-items: center; }
.vp { padding-left: 43px; }
.vp2 { padding-left: 26px; }
.vp2 .tw { margin-right: 4px; }
.viewbtns { margin-top: 7px; display: flex; justify-content: flex-end; padding-right: 3px; }
.dockhead-tools { margin-top: 9px; }
.exprow { height: 41px; padding-bottom: 2px; display: flex; align-items: center; justify-content: flex-end; padding-right: 17px; border-bottom: 1px solid #d6d5d3; flex: none; }
.statusrow { height: 29px; flex: none; position: relative; }
.sizegrip { position: absolute; right: 2px; bottom: 2px; width: 10px; height: 10px; background-image: radial-gradient(#bbb 1px, transparent 1px); background-size: 3px 3px; }
.blackfill { flex: 1; background: #050308; }

/* Window behind publishers */
.behind { position: absolute; left: 350px; top: 768px; width: 470px; height: 247px; background: linear-gradient(#aaa 0, #aaa 22px, #e4e3e1 22px, #e4e3e1 244px, #2d2d2d 244px); }
.bt { position: absolute; font-size: 13px; line-height: 15px; color: #222; }
.bt-a { left: 10px; top: 39px; }
.bt-b { left: 11px; top: 74px; color: #2a4a8a; }
.bt-c { left: 12px; top: 101px; color: #2a4a8a; }
.bt-d { left: 11px; top: 168px; font-weight: 700; }
.bt-e { left: 12px; top: 205px; color: #2a4a8a; }
.bt-f { left: 444px; top: 39px; }

/* Joint state publisher */
.jbody { flex: 1; padding: 1px 2px 0 1px; }
.joint { height: 54px; }
.jhead { height: 25px; display: flex; align-items: center; justify-content: space-between; padding-right: 1px; }
.jname { font-weight: 700; font-size: 13.500px; letter-spacing: .05px; color: #4a4945; padding-bottom: 2px; white-space: nowrap; }
.jval { width: 77px; height: 25px; background: #fff; border: 1px solid #b3b2af; border-radius: 3px; text-align: right; padding-right: 2px; line-height: 23px; }
.slider { position: relative; height: 5px; margin: 12px 1px 0 2px; background: #e6e5e3; border: 1px solid #c4c3c0; border-radius: 3px; }
.fill { height: 5px; margin: -1px 0 0 -1px; border-radius: 3px; background: #ef6c3a; border-top: 1px solid #d8552a; border-bottom: 1px solid #d8552a; }
.knob { position: absolute; top: -10px; width: 12px; height: 20px; margin-left: -6px; background: linear-gradient(#fafafa, #dcdbd9); border: 1px solid #a5a4a1; border-radius: 4px 4px 6px 6px; clip-path: polygon(0 0, 100% 0, 100% 75%, 50% 100%, 0 75%); }
.knob::after { content: ""; position: absolute; left: 2px; right: 2px; top: 5px; height: 5px; border-top: 1px solid #aaa; border-bottom: 1px solid #aaa; }
.btn-center { height: 26px; }

/* Teleop GUI */
.tbody { flex: 1; display: flex; gap: 6px; padding: 11px 12px 0; }
.tables { width: 262px; flex: none; display: flex; flex-direction: column; gap: 6px; }
.matrix { height: 120px; background: #fff; border: 2px solid #c6c5c3; }
.matrix table { border-collapse: collapse; table-layout: fixed; width: 258px; }
.matrix td { width: 65px; height: 25px; padding: 0 0 2px 2px; border: 1px solid #c6c5c3; border-top: 0; border-left: 0; font-size: 14px; color: #3c3b37; }
.matrix td:first-child { width: 64px; }
.matrix td:last-child { width: 64px; border-right: 0; }
.focus { outline: 1px dotted #666; outline-offset: -1px; }
.controls { width: 390px; flex: none; margin-top: 1px; display: flex; flex-direction: column; gap: 7px; }
.group { margin: 0; padding: 2px 10px 0; border: 1px solid #8b8a87; border-radius: 3px; min-width: 0; }
.group legend { padding: 0 5px; margin-left: -1px; height: 17px; font-weight: 700; line-height: 15px; font-size: 14px; }
.group-console { height: 55px; }
.consolebtns { display: grid; grid-template-columns: 83px 83px 95px 83px; gap: 8px; }
.groups { display: grid; grid-template-columns: 192px 192px; gap: 6px; height: 183px; }
.group-off legend { color: #a5a4a1; }
.btn-off { background: linear-gradient(#ecebea, #dddcda); border-color: #cfcecc; color: #a5a4a1; margin-bottom: 8px; }
.bold { font-weight: 700; }
.c-green { color: #008000; }
.c-red { color: #ff0000; }
.c-blue { color: #0000ff; }
.c-brown { color: #a52a2a; }
```
